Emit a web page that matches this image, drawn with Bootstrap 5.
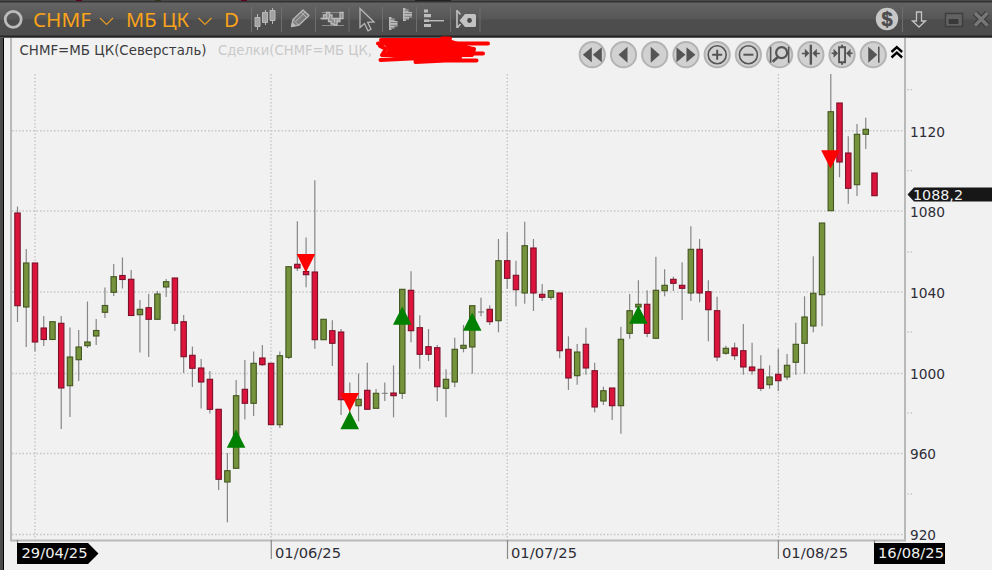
<!DOCTYPE html>
<html lang="ru">
<head>
<meta charset="utf-8">
<meta name="viewport" content="width=device-width, initial-scale=1">
<title>CHMF</title>
<link href="https://cdn.jsdelivr.net/npm/bootstrap@5.3.0/dist/css/bootstrap.min.css" rel="stylesheet">
<style>
body{width:992px;height:570px;overflow:hidden;background:#f1f1f1;font-family:"Noto Sans","Open Sans",sans-serif}
.toolbar{height:38px;background:linear-gradient(#494949 0 1px,#333 1px 2px,#646464 3px,#565656 19px,#4d4d4d 20px,#4d4d4d 35px,#252525 36px,#252525 37px,#8a8a8a 38px)}
.toolbar svg,.pane svg{display:block}
.inst text{font-family:"Noto Sans",sans-serif}
.pane{height:532px;border-left:3px solid #4a4a4a;box-shadow:inset 1px 0 #000}
.over{left:0;top:0;right:77px;height:36px}
#chart,.ttl{font-family:"DejaVu Sans Condensed","DejaVu Sans",sans-serif;font-stretch:condensed;font-size:14.500px}
</style>
<script src="https://cdn.jsdelivr.net/npm/bootstrap@5.3.0/dist/js/bootstrap.bundle.min.js"></script>
</head>
<body class="d-flex flex-column">
<header class="toolbar d-flex justify-content-between flex-shrink-0">
  <svg class="inst" width="500" height="38" fill="none">
    <g><rect x="76" width="6" height="1" fill="#600020"/><rect x="155" width="6" height="1" fill="#2c3a15"/><rect x="241" width="6" height="1" fill="#600020"/><rect x="415" width="36" height="1" fill="#222"/></g>
    <circle cx="13.2" cy="19.300" r="8" stroke="#bcbcbc" stroke-width="2.8"/>
    <g fill="#f9a31a" font-size="20">
      <text x="33" y="27" textLength="58" lengthAdjust="spacingAndGlyphs">CHMF</text>
      <text x="126" y="27" textLength="63" lengthAdjust="spacingAndGlyphs">МБ ЦК</text>
      <text x="224" y="27" textLength="15" lengthAdjust="spacingAndGlyphs">D</text>
    </g>
    <path d="M100 18l6.500 6.500 6.500-6.500M198.500 18l6.500 6.500 6.500-6.500" stroke="#e39a26" stroke-width="1.200"/>
    <path d="M251.500 7v25M281.500 7v25M315.500 7v25M349 7v25M382.500 7v25M416.500 7v25M450.500 7v25M480 7v25" stroke="#6e6e6e"/>
    <g stroke="#b8b8b8" fill="#a2a2a2">
      <path d="M257.500 14v16M265.500 10v15M272.500 8v16"/>
      <path d="M255 17.500h5v9h-5zM262.500 12.500h5v10h-5zM270 10.500h5v10h-5z"/>
    </g>
    <g stroke="#b8b8b8" stroke-linejoin="round">
      <path d="M291.500 26.500l1.500-7 10-9.500 6 5.500-10 9.500z" fill="#7d7d7d" stroke-width="1.300"/>
      <path d="M293 19.500l5.500 5.500M296 21l9-8.500M301 12l5.500 5.500"/>
      <path d="M291.500 26.500l1-4 3 3z" fill="#b8b8b8"/>
    </g>
    <path d="M322 12.500h22M322 25.500h22" stroke="#8c8c8c"/>
    <path d="M323.500 18.500v-3.500h3v-2.500h3v2.500h2.500v3.500h8v-6h3v6h-3v3h-3v3.500h-3v-1h-3v-2.500h-2.500v-3h-8M326.500 15v3.500M329.500 15v3.500M334.500 18.500v4M337.500 18.500v4" fill="#8a8a8a" stroke="#bcbcbc" stroke-width="1.300"/>
    <path d="M322 18.700h5" stroke="#bcbcbc" stroke-width="1.300"/>
    <path d="M360 8.500v19l4.500-4 3.500 7.300 3-1.500-3.300-7 6.300-.3z" stroke="#b5b5b5" stroke-width="1.300"/>
    <g fill="#bababa">
      <path d="M389 17h2.500v1.500h3v2.500h3v5.500h-3v2h-3V30H389zM403 8h2.500v1.500h3V12h3.500v5.500h-3v2h-3V21H403z"/>
      <path d="M390.500 19.700h5M390.500 22.500h7M390.500 25.300h7M390.500 28h4M404.500 10.700h5M404.500 13.500h7.500M404.500 16.300h7.500M404.500 19h4" stroke="#777" stroke-width=".9"/>
    </g>
    <path d="M424 11h4M424 15.700h7M424 25.500h7" stroke="#bdbdbd" stroke-width="3.200"/>
    <path d="M424 20.700h5" stroke="#bdbdbd" stroke-width="2.600"/><path d="M429 20.700h15" stroke="#bdbdbd" stroke-width="1.400"/>
    <path d="M457 10v18M457.500 11l3 3.500M457.500 27.500l3-3.500" stroke="#bdbdbd" stroke-width="1.700"/>
    <path d="M459.500 20.500l5.500-6.500h9.500q1.500 0 1.500 1.500v10q0 1.500-1.500 1.500H465z" fill="#c2c2c2"/>
    <circle cx="469.500" cy="20.500" r="2.400" fill="#484848"/>
  </svg>
  <svg width="130" height="38" viewBox="862 0 130 38" fill="none">
    <circle cx="887" cy="19" r="11.200" fill="#c7c7c7"/>
    <text x="887" y="25.800" text-anchor="middle" font-size="20" font-weight="700" font-family="Liberation Sans" fill="#4c4c4c" stroke="#4c4c4c" stroke-width=".5">$</text>
    <path d="M902.500 7v25" stroke="#6e6e6e"/>
    <path d="M916.500 12h5v9h4l-6.500 6-6.500-6h4z" stroke="#c4c4c4" stroke-width="1.300"/>
    <path d="M945.500 13.500h17v13h-17z" fill="#626262" stroke="#3d3d3d" stroke-width="1.400"/>
    <rect x="948.500" y="19" width="10" height="5" rx="1" fill="#393939"/>
    <path d="M975 13l12.500 12.500M987.500 13l-12.500 12.500" stroke="#3d3d3d" stroke-width="6"/>
    <path d="M975 13l12.500 12.500M987.500 13l-12.500 12.500" stroke="#777" stroke-width="3.300"/>
  </svg>
</header>
<main class="pane position-relative flex-grow-1">
  <svg id="chart" width="989" height="532" viewBox="3 38 989 532" fill="none"></svg>
  <div class="over position-absolute d-flex justify-content-between">
    <svg class="ttl" width="500" height="36" viewBox="3 38 500 36" overflow="visible">
      <text x="19.500" y="55.300" fill="#3c3c40" textLength="187" lengthAdjust="spacingAndGlyphs">CHMF=МБ ЦК(Северсталь)</text>
      <text x="218" y="55.300" fill="#c9c9c9" textLength="154" lengthAdjust="spacingAndGlyphs">Сделки(CHMF=МБ ЦК,</text>
      <path d="M380 40l58-1 14 1 12 4 10 4-4 6-40 2-34 2-12-2 4-7z" fill="#f00"/>
      <g stroke="#f00" stroke-width="4" stroke-linecap="round" stroke-linejoin="round">
        <path d="M378 43.500H488M381 40h60M442 38.500h8M380 46l6 3-4 6h90l2-6-20-3M400 53.500h83M380.500 60l20-1 40-2M415.500 62l30-1.500h31M440 58h20" fill="none"/>
      </g>
    </svg>
    <svg id="nav" width="340" height="36" viewBox="575 38 340 36" fill="none"></svg>
  </div>
</main>
<script>
// each row: high, body top, body bottom, low, colour (r falling, g rising, d unchanged)
const rows=`206.5 213 305.7 322 r|249 263 307 347 g|263 263 342 351.5 r|316 328 339.5 346 r|321.7 321.7 339.5 339.5 g|316 323.3 388 429 r|327.5 357 385.7 417 g|330 347 359.7 381 g|301.5 342 345.7 348 g|319 330.5 336 345 g|287.5 305.5 312.3 318 g|264 276.7 292.3 296 g|257.5 275.5 279.5 288.5 r|270 279.3 315.5 315.5 r|300 309.3 314.7 352.5 g|294 307.7 319.3 357 r|291 294 319.3 319.3 g|279 281.7 287 297 g|278 278 323.3 331 r|315 321.7 356.7 373 r|346.5 355.3 368.3 387 r|359 368 382 408.5 r|371 379.3 409.3 413.5 r|409.3 409.3 479.3 490 r|453 470.7 482 522.3 g|380 395.7 468.3 468.3 g|360 389.3 403.3 419.5 r|351.5 363.3 403.3 416 g|345 358 364.7 366 r|363.3 363.3 424.7 424.7 r|351.5 355.7 424.7 428 g|266.7 266.7 357.3 359 g|221.3 264.3 268 271 r|237.5 271.5 274.7 287.3 r|180.3 272 339.7 348.7 r|319.3 319.3 339.7 339.7 g|320.3 330.7 343.3 366 r|329 332 399.7 415 r|382.5 400 404 415 r|373.7 399.3 405.7 421.3 g|362.7 390.3 409.3 409.3 r|389 393.3 408.3 408.3 g|382.5 393.3 393.3 401 d|365.3 393 395.7 417.3 r|289.3 289.3 393.3 399 g|271.3 290.3 330.7 342.3 r|315.3 327.7 354.3 368.7 r|329 346.7 354.3 361 r|345 347.7 386.7 401.3 r|369.3 379.3 388.3 417.3 g|337.7 349.3 382 387.3 g|325 345.3 348.3 352.3 g|305.7 305.7 347 373.7 g|297.7 312 312 316.3 d|305.3 309.3 321.7 325 r|239 260.7 320.7 332.3 g|232.3 260.7 278.3 288.7 r|260.7 275.3 289.7 306.3 r|221.7 245.7 293 303.7 g|239 248 293 311 r|284 294.3 297.3 301 r|290.7 290.7 297.3 300 g|293 293 350.7 358.3 r|336.3 349.3 378 390 r|344 352 375.7 384.7 g|327.7 344.3 368 374.7 r|362.7 370.7 407 412.3 r|386.7 390.7 401 405 g|388 388 405.7 420 r|326.7 339.3 405.7 433.7 g|294 310.7 333.3 338.7 g|280.3 304.3 307 307 g|290.3 304.3 333.3 337.3 r|256.7 290.3 338.3 338.3 g|269.3 285.3 290.7 296.3 g|276.7 279.3 283.3 291 r|262.3 285.3 288.3 320 r|226.3 249.3 293 301 g|239 249.3 293 302.3 r|280.3 291.7 309.7 341.3 r|296.7 310.7 357 361.3 r|345.7 348.3 353.3 354.7 g|342.7 348 355.7 360 r|324 350.7 367 374.7 r|342.7 367 370.7 374.7 r|355.3 369.3 388.3 391 r|365.3 377 384.7 388.7 g|348.7 374.3 380.7 391 r|354 365.3 377 380 g|322.7 344.3 362.3 374.7 g|296.3 317 343.3 373.7 g|256.3 293.3 326 332.3 g|223 223 294.7 326.3 g|74 111.7 210.7 210.7 g|103 103 162 177.3 r|136.3 153 188.3 203.7 r|124 134.3 184.7 196 g|117.7 129.3 134.3 149 g|173 173 195.7 195.7 r`.split('|').map(s=>s.split(' '));
let h='';
const txt=(x,y,w,t,c='#2e2e38')=>`<text x="${x}" y="${y}" fill="${c}" textLength="${w}" lengthAdjust="spacingAndGlyphs">${t}</text>`;
for(const y of [130.7,211,292,373.5,453.5,534.5])h+=`<path d="M12 ${y}H904" stroke="#c6c6c6" stroke-width="1.4" stroke-dasharray="1.5 2"/>`;
for(const x of [35,271,507.3,778.4])h+=`<path d="M${x} 74V540" stroke="#c6c6c6" stroke-width="1.4" stroke-dasharray="1.5 2"/>`;
for(const y of [89.7,170.7,252,332,413,494])h+=`<path d="M907 ${y}h5" stroke="#b5b5b5" stroke-dasharray="1.5 2"/>`;
h+='<path d="M11 38V540.5H905V38" stroke="#b9b9b9" stroke-width="2"/><path d="M17.5 540v3M271.300 540v19M507.500 540v19M778.400 540v19M874.500 540v3" stroke="#8a8a8a" stroke-width="1.200"/>';
rows.forEach(([a,b,c,d,k],i)=>{
  const x=17.5+8.745*i;
  h+=`<path d="M${x} ${a}V${d}" stroke="#868686" stroke-width="1.2"/>`;
  if(k==='d')h+=`<path d="M${x-3} ${b}h6" stroke="#777"/>`;
  else h+=`<rect x="${x-2.7}" y="${+b}" width="5.4" height="${Math.max(c-b,2)}" fill="${k==='r'?'#dc143c':'#75923c'}" stroke="${k==='r'?'#7c1029':'#43561f'}" stroke-width="1.1"/>`;
});
for(const [x,y] of [[305.9,254],[349.7,393],[830.5,150.300]])h+=`<path d="M${x-9.3} ${y}h18.600l-9.300 18.500z" fill="#f00"/>`;
for(const [x,y] of [[236.1,429.5],[349.7,411],[402.3,306.5],[472.2,312.5],[638.4,305.5]])h+=`<path d="M${x-9.3} ${y+18.3}h18.600l-9.300-18.300z" fill="#008000"/>`;
for(const [y,t] of [[136.5,1120],[216.600,1080],[297.6,1040],[379,1000],[459.2,960],[540.2,920]])h+=txt(910,y,t>999?35:26,t);
h+='<path d="M907.500 194.500l6.500-7H992v14H914z" fill="#171717"/>'+txt(913,200,50,'1088,2','#f1f1f1');
h+='<path d="M17 543h71l10.500 10.500L88 564H17zM874 543h71v21H874z" fill="#000"/>'+txt(21.500,557.800,66,'29/04/25','#f0f0f0')+txt(878,557.800,66,'16/08/25','#f0f0f0');
h+=txt(275,557.800,66,'01/06/25')+txt(511,557.800,66,'01/07/25')+txt(782,557.800,66,'01/08/25');
document.getElementById('chart').innerHTML=h;

// round navigation buttons, each glyph drawn around its own centre
const F='fill="#555"',S='stroke="#555" stroke-width="1.6"';
const glyphs=[
 `<path d="M-9.500 0l9-7.500v15zM.500 0l9-7.500v15z" ${F}/>`,
 `<path d="M-5 0l9-8v16z" ${F}/>`,
 `<path d="M5 0l-9-8v16z" ${F}/>`,
 `<path d="M9.500 0l-9-7.500v15zM-.500 0l-9-7.500v15z" ${F}/>`,
 `<circle r="9" ${S}/><path d="M-5 0H5M0-5V5" stroke="#555" stroke-width="2"/>`,
 `<circle r="9" ${S}/><path d="M-5 0H5" stroke="#555" stroke-width="2"/>`,
 `<path d="M-9-8V8M9-8V8" ${S}/><circle cx="2" cy="-2" r="5.500" stroke="#555" stroke-width="2.200"/><path d="M-2 2.500l-5 4.500" stroke="#555" stroke-width="2.700"/>`,
 `<path d="M0-10V10" stroke="#555" stroke-width="2.400"/><path d="M-9-2h3v-4l4.500 4.500-4.500 4.500v-3.500h-3zM9-2H6v-4L1.500-1.500l4.500 4.500V-.5h3z" ${F}/>`,
 `<path d="M-3-7.500h6v15h-6zM0-10v2.500M0 7.500V10" stroke="#555" stroke-width="1.900"/><path d="M-10.500-2.200h2v-3.800l4.500 4.500-4.500 4.500v-3.700h-2zM10.500-2.200h-2v-3.800L4-1.500l4.500 4.500V-.7h2z" ${F}/>`,
 `<path d="M4 0l-9-8v16z" ${F}/><path d="M5.500-8V8" ${S}/>`];
document.getElementById('nav').innerHTML=glyphs.map((g,i)=>`<g transform="translate(${592.3+31.22*i} 54.700)"><circle r="12.600" fill="#d1d1d1" stroke="#b3b3b3" stroke-width="2"/>${g}</g>`).join('')+'<path d="M891.500 52l5.300-4.800 5.300 4.800M891.500 57.500l5.300-4.800 5.300 4.800" stroke="#000" stroke-width="2.400"/>';
</script>
</body>
</html>
